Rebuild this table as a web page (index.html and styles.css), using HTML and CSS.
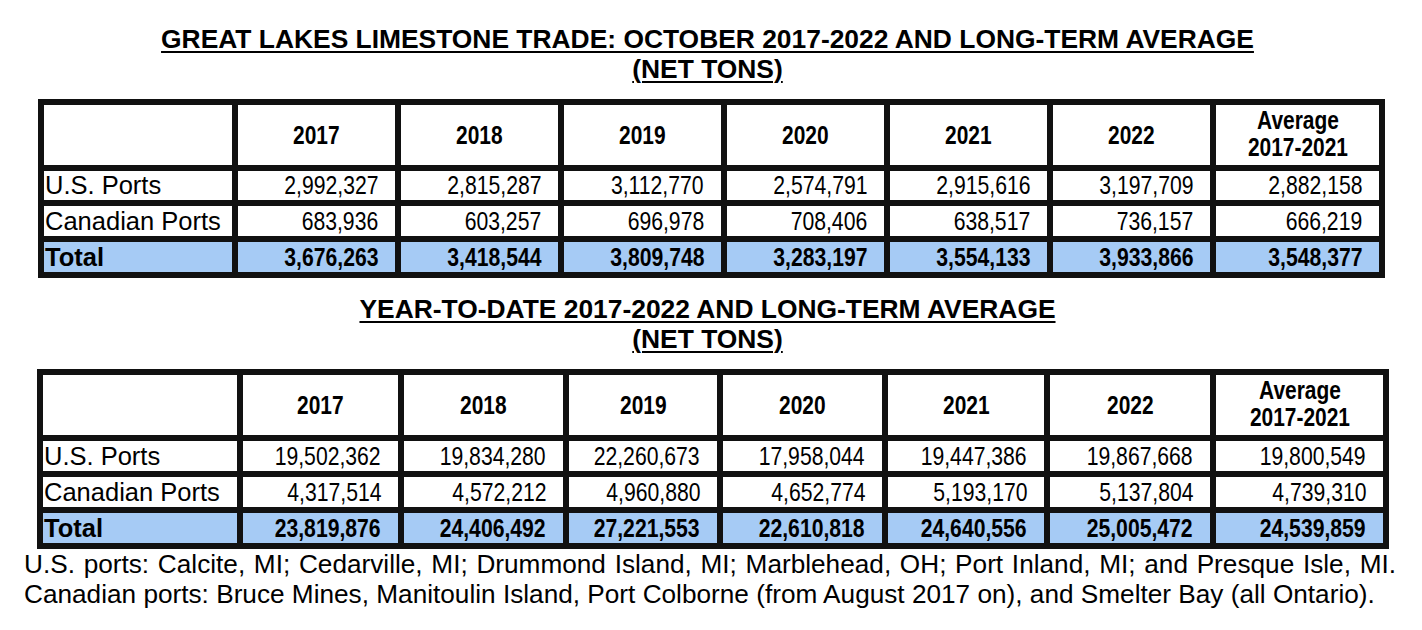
FILE: index.html
```html
<!DOCTYPE html>
<html lang="en">
<head>
<meta charset="utf-8">
<title>Great Lakes Limestone Trade</title>
<link rel="stylesheet" href="styles.css">
</head>
<body>
<div class="page">
  <h1 class="title title-1"><span>GREAT LAKES LIMESTONE TRADE: OCTOBER 2017-2022 AND LONG-TERM AVERAGE</span><br><span>(NET TONS)</span></h1>
  <div class="grid grid-1" role="table">
    <div class="c hd"></div>
    <div class="c hd"><span class="h">2017</span></div>
    <div class="c hd"><span class="h">2018</span></div>
    <div class="c hd"><span class="h">2019</span></div>
    <div class="c hd"><span class="h">2020</span></div>
    <div class="c hd"><span class="h">2021</span></div>
    <div class="c hd"><span class="h">2022</span></div>
    <div class="c hd avg"><span class="h">Average<br>2017-2021</span></div>

    <div class="c lbl">U.S. Ports</div>
    <div class="c num"><span class="n">2,992,327</span></div>
    <div class="c num"><span class="n">2,815,287</span></div>
    <div class="c num"><span class="n">3,112,770</span></div>
    <div class="c num"><span class="n">2,574,791</span></div>
    <div class="c num"><span class="n">2,915,616</span></div>
    <div class="c num"><span class="n">3,197,709</span></div>
    <div class="c num"><span class="n">2,882,158</span></div>

    <div class="c lbl">Canadian Ports</div>
    <div class="c num"><span class="n">683,936</span></div>
    <div class="c num"><span class="n">603,257</span></div>
    <div class="c num"><span class="n">696,978</span></div>
    <div class="c num"><span class="n">708,406</span></div>
    <div class="c num"><span class="n">638,517</span></div>
    <div class="c num"><span class="n">736,157</span></div>
    <div class="c num"><span class="n">666,219</span></div>

    <div class="c lbl tot">Total</div>
    <div class="c num tot"><span class="n">3,676,263</span></div>
    <div class="c num tot"><span class="n">3,418,544</span></div>
    <div class="c num tot"><span class="n">3,809,748</span></div>
    <div class="c num tot"><span class="n">3,283,197</span></div>
    <div class="c num tot"><span class="n">3,554,133</span></div>
    <div class="c num tot"><span class="n">3,933,866</span></div>
    <div class="c num tot"><span class="n">3,548,377</span></div>
  </div>

  <h2 class="title title-2"><span>YEAR-TO-DATE 2017-2022 AND LONG-TERM AVERAGE</span><br><span>(NET TONS)</span></h2>
  <div class="grid grid-2" role="table">
    <div class="c hd"></div>
    <div class="c hd"><span class="h">2017</span></div>
    <div class="c hd"><span class="h">2018</span></div>
    <div class="c hd"><span class="h">2019</span></div>
    <div class="c hd"><span class="h">2020</span></div>
    <div class="c hd"><span class="h">2021</span></div>
    <div class="c hd"><span class="h">2022</span></div>
    <div class="c hd avg"><span class="h">Average<br>2017-2021</span></div>

    <div class="c lbl">U.S. Ports</div>
    <div class="c num"><span class="n">19,502,362</span></div>
    <div class="c num"><span class="n">19,834,280</span></div>
    <div class="c num"><span class="n">22,260,673</span></div>
    <div class="c num"><span class="n">17,958,044</span></div>
    <div class="c num"><span class="n">19,447,386</span></div>
    <div class="c num"><span class="n">19,867,668</span></div>
    <div class="c num"><span class="n">19,800,549</span></div>

    <div class="c lbl">Canadian Ports</div>
    <div class="c num"><span class="n">4,317,514</span></div>
    <div class="c num"><span class="n">4,572,212</span></div>
    <div class="c num"><span class="n">4,960,880</span></div>
    <div class="c num"><span class="n">4,652,774</span></div>
    <div class="c num"><span class="n">5,193,170</span></div>
    <div class="c num"><span class="n">5,137,804</span></div>
    <div class="c num"><span class="n">4,739,310</span></div>

    <div class="c lbl tot">Total</div>
    <div class="c num tot"><span class="n">23,819,876</span></div>
    <div class="c num tot"><span class="n">24,406,492</span></div>
    <div class="c num tot"><span class="n">27,221,553</span></div>
    <div class="c num tot"><span class="n">22,610,818</span></div>
    <div class="c num tot"><span class="n">24,640,556</span></div>
    <div class="c num tot"><span class="n">25,005,472</span></div>
    <div class="c num tot"><span class="n">24,539,859</span></div>
  </div>

  <div class="note">
    <p class="note-line note-line-1">U.S. ports: Calcite, MI; Cedarville, MI; Drummond Island, MI; Marblehead, OH; Port Inland, MI; and Presque Isle, MI.</p>
    <p class="note-line">Canadian ports: Bruce Mines, Manitoulin Island, Port Colborne (from August 2017 on), and Smelter Bay (all Ontario).</p>
  </div>
</div>
</body>
</html>
```

FILE: styles.css
```css
html, body {
  margin: 0;
  padding: 0;
  background: #ffffff;
}

body {
  font-family: "Liberation Sans", Arial, sans-serif;
  color: #000000;
}

.page {
  width: 1367px;
  padding: 24px 0 0 24px;
  display: flex;
  flex-direction: column;
  align-items: flex-start;
}

.title {
  align-self: stretch;
  margin: 0;
  font-size: 26.4px;
  font-weight: bold;
  line-height: 30px;
  text-align: center;
}

.title span {
  text-decoration: underline;
  text-decoration-thickness: 2px;
  text-underline-offset: 3px;
}

.title-1 {
  margin-bottom: 15px;
}

.title-2 {
  margin-top: 16px;
  margin-bottom: 15px;
}

.grid {
  display: grid;
  gap: 6px;
  padding: 6px;
  background: #111111;
}

.grid-1 {
  margin-left: 14px;
  grid-template-columns: 188px repeat(6, 157px) 163px;
  grid-template-rows: 60px 29px 30px 30px;
}

.grid-2 {
  margin-left: 13px;
  grid-template-columns: 194px 155px 159px 148px 159px 156px 160px 167px;
  grid-template-rows: 60px 30px 30px 30px;
}

.c {
  background: #ffffff;
  font-size: 25.5px;
  display: flex;
  align-items: center;
  white-space: nowrap;
}

.hd {
  justify-content: center;
  text-align: center;
  font-weight: bold;
}

.h {
  display: inline-block;
  line-height: 27px;
  transform: scaleX(0.82);
}

.avg {
  padding-bottom: 3px;
}

.lbl {
  padding-left: 1px;
}

.num {
  justify-content: flex-end;
  padding-right: 17px;
}

.n {
  display: inline-block;
  transform: scaleX(0.83);
  transform-origin: right center;
}

.tot {
  background: #a6cbf5;
  font-weight: bold;
}

.note {
  width: 1372px;
}

.note-line {
  margin: 0;
  font-size: 26.2px;
  line-height: 30px;
  white-space: nowrap;
}

.note-line-1 {
  text-align: justify;
  text-align-last: justify;
  white-space: normal;
}
```
